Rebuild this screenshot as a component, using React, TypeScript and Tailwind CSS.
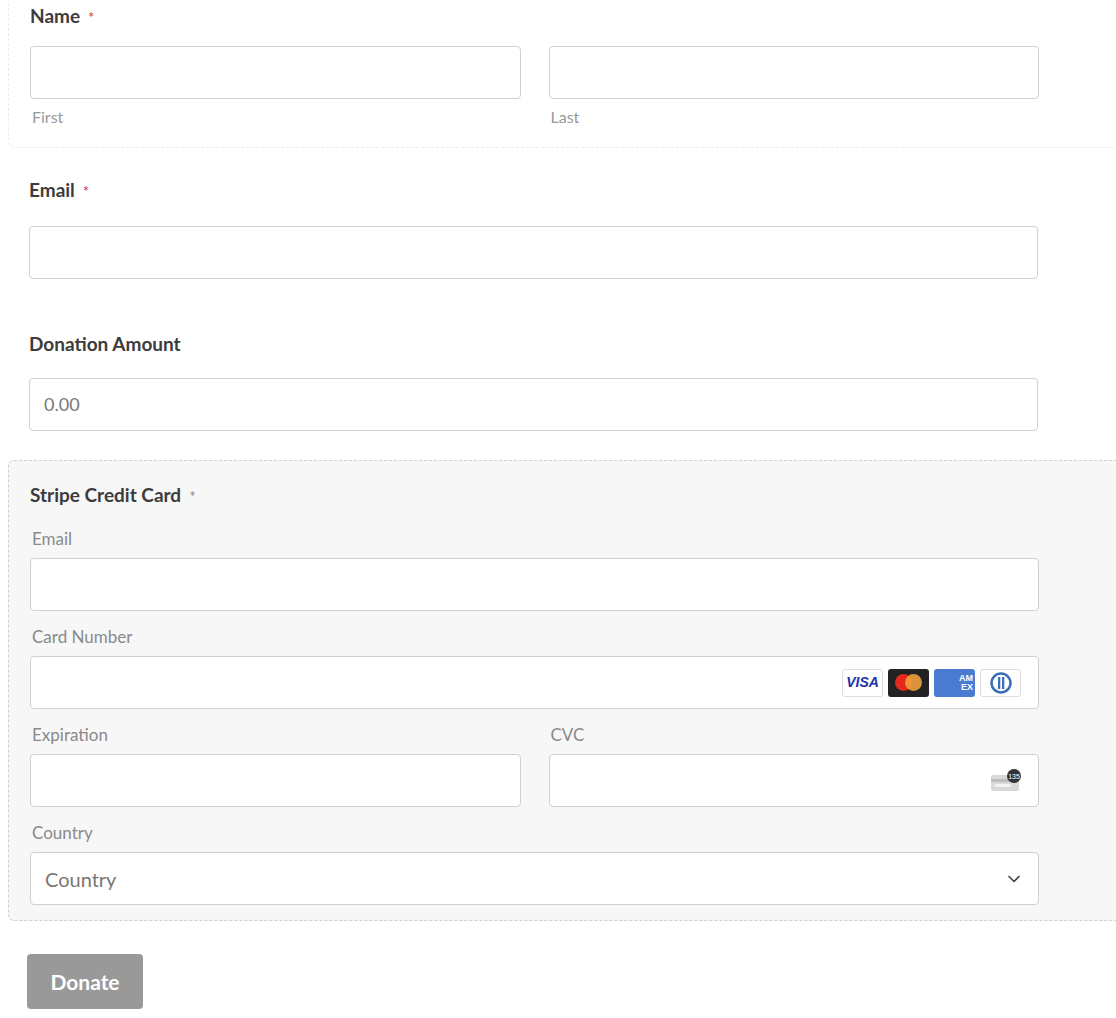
import { ChevronDown } from "lucide-react";

const inputCls = "h-[53px] w-full rounded-[4px] border border-[#d0d0d0] bg-white";

const Req = ({ grey }: { grey?: boolean }) => (
  <span className={`ml-2 text-[15px] font-normal ${grey ? "text-[#888]" : "text-[#d63637]"}`}>*</span>
);

const Sub = ({ children }: { children: React.ReactNode }) => (
  <div className="mt-[8px] text-[16px] text-[#999] leading-[20px] pl-[2px]">{children}</div>
);

const Small = ({ children }: { children: React.ReactNode }) => (
  <div className="mb-[9px] text-[17px] text-[#8a8a8a] leading-[20px] pl-[2px]">{children}</div>
);

export default function App() {
  return (
    <div className="w-[1116px] h-[1018px] overflow-hidden bg-white text-[#3c3c3c]" style={{ fontFamily: "Lato, 'Open Sans', sans-serif" }}>
      <div className="pl-[8px]">
        {/* Name */}
        <div className="w-[1120px] -mt-[10px] pt-[13px] pb-[20px] pl-[21px] border border-dashed border-[#ececec] rounded-b-[8px]">
          <div className="text-[19px] font-bold leading-[24px] mb-[17px]">Name<Req /></div>
          <div className="flex gap-[28px] w-[1009px]">
            <div className="flex-1"><div className={inputCls} /><Sub>First</Sub></div>
            <div className="flex-1"><div className={inputCls} /><Sub>Last</Sub></div>
          </div>
        </div>

        <div className="pl-[21px] w-[1030px]">
          <div className="mt-[30px] text-[19px] font-bold leading-[24px] mb-[23px]">Email<Req /></div>
          <div className={inputCls} />
          <div className="mt-[53px] text-[19px] font-bold leading-[24px] mb-[22px]">Donation Amount</div>
          <div className={`${inputCls} flex items-center px-[14px] text-[18px] text-[#777]`}>0.00</div>
        </div>

        {/* Stripe */}
        <div className="mt-[29px] w-[1120px] h-[461px] pt-[22px] pl-[21px] bg-[#f7f7f7] border border-dashed border-[#d0d0d0] rounded-[6px]">
          <div className="w-[1009px]">
            <div className="text-[19px] font-bold leading-[24px] mb-[21px]">Stripe Credit Card<Req grey /></div>
            <Small>Email</Small>
            <div className={inputCls} />
            <div className="mt-[16px]"><Small>Card Number</Small></div>
            <div className={`${inputCls} flex items-center justify-end gap-[5px] pr-[17px]`}>
              <div className="w-[41px] h-[28px] rounded-[3px] border border-[#ddd] bg-white flex items-center justify-center text-[14px] font-black italic text-[#1a33a8]" style={{ fontFamily: "'Liberation Sans', sans-serif" }}>VISA</div>
              <div className="w-[41px] h-[28px] rounded-[3px] bg-[#222] flex items-center justify-center">
                <div className="w-[17px] h-[17px] rounded-full bg-[#e4281c]" />
                <div className="w-[17px] h-[17px] rounded-full bg-[#f0a03c] opacity-90 -ml-[7px]" />
              </div>
              <div className="w-[41px] h-[28px] rounded-[3px] bg-[#4a7bd1] flex flex-col items-end justify-center pr-[2px] text-[9px] leading-[9px] font-bold text-white" style={{ fontFamily: "'Liberation Sans', sans-serif" }}><span>AM</span><span>EX</span></div>
              <div className="w-[41px] h-[28px] rounded-[3px] border border-[#ddd] bg-white flex items-center justify-center">
                <svg width="26" height="22" viewBox="0 0 26 22"><circle cx="13" cy="11" r="9.5" fill="none" stroke="#3b6db8" strokeWidth="2.5" /><rect x="10" y="5" width="2.3" height="12" fill="#3b6db8" /><rect x="14" y="5" width="2.3" height="12" fill="#3b6db8" /></svg>
              </div>
            </div>
            <div className="mt-[16px] flex gap-[28px]">
              <div className="flex-1"><Small>Expiration</Small><div className={inputCls} /></div>
              <div className="flex-1"><Small>CVC</Small>
                <div className={`${inputCls} flex items-center justify-end pr-[16px]`}>
                  <svg width="32" height="24" viewBox="0 0 32 24"><rect x="1" y="6" width="28" height="16" rx="2" fill="#d8d8d8" /><rect x="1" y="10" width="28" height="3" fill="#bdbdbd" /><rect x="5" y="15" width="16" height="3" fill="#f2f2f2" /><circle cx="24" cy="7" r="7" fill="#333" /><text x="24" y="9.5" fontSize="7" fill="#fff" textAnchor="middle" fontFamily="Liberation Sans, sans-serif">135</text></svg>
                </div>
              </div>
            </div>
            <div className="mt-[16px]"><Small>Country</Small></div>
            <div className={`${inputCls} flex items-center justify-between px-[14px] text-[20px] text-[#777]`}>
              <span>Country</span>
              <ChevronDown className="w-5 h-5 text-[#444]" strokeWidth={2} />
            </div>
          </div>
        </div>

        <button className="mt-[33px] ml-[19px] w-[116px] h-[55px] rounded-[4px] bg-[#999] text-white text-[21px] font-bold">Donate</button>
      </div>
    </div>
  );
}
